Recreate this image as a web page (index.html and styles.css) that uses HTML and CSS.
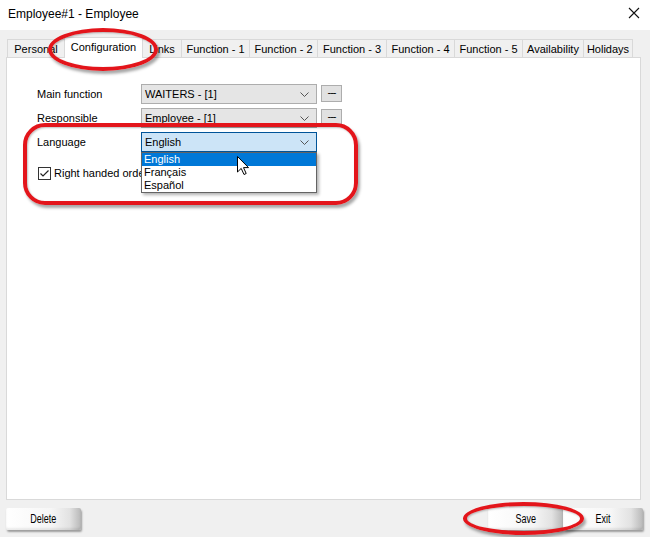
FILE: index.html
```html
<!DOCTYPE html>
<html lang="en">
<head>
  <meta charset="UTF-8" />
  <title>Employee#1 - Employee</title>
  <link rel="stylesheet" href="styles.css">
</head>
<body>
<div class="window">
  <div class="titlebar">
    <span class="title">Employee#1 - Employee</span>
    <svg class="close" width="12" height="12" viewBox="0 0 12 12">
      <path d="M1 1 L11 11 M11 1 L1 11" stroke="#111" stroke-width="1.1" fill="none"/>
    </svg>
  </div>

  <div class="tabs">
    <div class="tab">Personal</div>
    <div class="tab active">Configuration</div>
    <div class="tab">Links</div>
    <div class="tab">Function - 1</div>
    <div class="tab">Function - 2</div>
    <div class="tab">Function - 3</div>
    <div class="tab">Function - 4</div>
    <div class="tab">Function - 5</div>
    <div class="tab">Availability</div>
    <div class="tab">Holidays</div>
  </div>

  <div class="panel">
    <div class="form">
      <label class="field-label">Main function</label>
      <div class="combo"><span>WAITERS - [1]</span>
        <svg class="chev" width="9" height="5" viewBox="0 0 9 5"><path d="M0.5 0.5 L4.5 4.5 L8.5 0.5" stroke="#555" fill="none"/></svg>
      </div>
      <button class="dots">---</button>

      <label class="field-label">Responsible</label>
      <div class="combo"><span>Employee - [1]</span>
        <svg class="chev" width="9" height="5" viewBox="0 0 9 5"><path d="M0.5 0.5 L4.5 4.5 L8.5 0.5" stroke="#555" fill="none"/></svg>
      </div>
      <button class="dots">---</button>

      <label class="field-label">Language</label>
      <div class="combo-wrap">
        <div class="combo focus"><span>English</span>
          <svg class="chev" width="9" height="5" viewBox="0 0 9 5"><path d="M0.5 0.5 L4.5 4.5 L8.5 0.5" stroke="#555" fill="none"/></svg>
        </div>
        <ul class="dropdown">
          <li class="selected">English</li>
          <li>Français</li>
          <li>Español</li>
        </ul>
      </div>
    </div>

    <label class="check">
      <svg class="box" width="13" height="13" viewBox="0 0 13 13">
        <rect x="0.5" y="0.5" width="12" height="12" fill="#fff" stroke="#333"/>
        <path d="M2.5 6.5 L5 9 L10.5 3.5" stroke="#222" stroke-width="1.2" fill="none"/>
      </svg>
      <span class="check-text">Right handed order</span>
    </label>
  </div>

  <div class="footer">
    <button class="btn"><span>Delete</span></button>
    <div class="footer-right">
      <button class="btn"><span>Save</span></button>
      <button class="btn exit"><span>Exit</span></button>
    </div>
  </div>

  <!-- annotations drawn over the dialog -->
  <div class="mark mark-tab"></div>
  <div class="mark mark-lang"></div>
  <div class="mark mark-save"></div>
  <svg class="cursor" width="13" height="20" viewBox="0 0 13 20">
    <path d="M0.5 0.5 L0.5 16 L4.2 12.4 L7 18.5 L9.2 17.5 L6.5 11.6 L11.5 11.6 Z" fill="#fff" stroke="#000" stroke-width="1"/>
  </svg>
</div>
</body>
</html>
```

FILE: styles.css
```css
body {
  margin: 0;
  font-family: 'Liberation Sans', Arial, sans-serif;
  font-size: 11px;
  color: #000;
  background-color: #f0f0f0;
}
.window {
  position: relative;
  width: 650px;
  height: 537px;
  overflow: hidden;
  background-color: #f0f0f0;
}
.titlebar {
  height: 30px;
  background-color: #fff;
  display: flex;
  align-items: center;
  justify-content: space-between;
  padding: 0 10px 0 8px;
  box-sizing: border-box;
}
.title {
  font-size: 12px;
  margin-top: -3px;
}
.close {
  margin-top: -4px;
}
.tabs {
  display: grid;
  grid-template-columns: 58px 78px 39px 68px 68px 69px 68px 68px 61px 49px;
  align-items: end;
  height: 20px;
  margin: 7px 0 0 7px;
  position: relative;
  z-index: 1;
}
.tab {
  height: 18px;
  border: 1px solid #d9d9d9;
  border-bottom: none;
  border-left: none;
  box-sizing: border-box;
  background-color: #f0f0f0;
  display: flex;
  align-items: center;
  justify-content: center;
  white-space: nowrap;
}
.tab:first-child {
  border-left: 1px solid #d9d9d9;
}
.tab.active {
  height: 21px;
  margin-bottom: -1px;
  background-color: #fff;
  border-left: 1px solid #d9d9d9;
  margin-left: -1px;
  padding-bottom: 2px;
}
.panel {
  margin-left: 6px;
  width: 635px;
  height: 443px;
  background-color: #fff;
  border: 1px solid #d9d9d9;
  box-sizing: border-box;
}
.form {
  display: grid;
  grid-template-columns: 100px 176px 21px;
  grid-auto-rows: 20px;
  column-gap: 4px;
  row-gap: 4px;
  padding: 26px 0 0 30px;
  align-items: center;
}
.field-label {
  line-height: 20px;
}
.combo-wrap {
  position: relative;
  height: 20px;
}
.combo {
  height: 20px;
  box-sizing: border-box;
  border: 1px solid #adadad;
  background-color: #e5e5e5;
  display: flex;
  align-items: center;
  justify-content: space-between;
  padding: 0 7px 0 3px;
}
.combo.focus {
  background-color: #cce4f7;
  border-color: #005499;
}
.dots {
  height: 17px;
  width: 21px;
  align-self: start;
  margin-top: 1px;
  border: 1px solid #adadad;
  background-color: #e1e1e1;
  font-family: inherit;
  font-size: 11px;
  letter-spacing: -1px;
  padding: 0 0 3px 0;
  line-height: 12px;
}
.dropdown {
  position: absolute;
  left: 0;
  top: 20px;
  width: 176px;
  margin: 0;
  padding: 0;
  list-style: none;
  background-color: #fff;
  border: 1px solid #646464;
  box-sizing: border-box;
  box-shadow: 2px 2px 3px rgba(0,0,0,0.3);
  z-index: 2;
}
.dropdown li {
  height: 13px;
  line-height: 13px;
  padding-left: 2px;
}
.dropdown li.selected {
  background-color: #0078d7;
  color: #fff;
}
.check {
  display: flex;
  align-items: center;
  gap: 3px;
  margin: 14px 0 0 31px;
  height: 14px;
  white-space: nowrap;
}
.check-text {
  width: 87px;
  overflow: hidden;
}
.footer {
  height: 37px;
  display: flex;
  justify-content: space-between;
  padding: 8px 7px 0 6px;
  box-sizing: border-box;
}
.footer-right {
  display: flex;
}
.btn {
  width: 75px;
  height: 22px;
  border: none;
  border-radius: 2px;
  background: linear-gradient(to right, #ffffff 0%, #f6f6f6 60%, #e2e2e2 85%, #b8b8b8 100%);
  box-shadow: 1px 2px 2px rgba(0,0,0,0.35), inset 0 -2px 2px rgba(0,0,0,0.08);
  font-family: inherit;
  font-size: 12px;
  padding: 0;
}
.btn span {
  display: inline-block;
  transform: scaleX(0.75);
}
.btn.exit {
  width: 80px;
}
.mark {
  position: absolute;
  box-sizing: border-box;
  border: 4px solid #e3151b;
  box-shadow: 2px 3px 3px rgba(0,0,0,0.35), inset 1px 1px 2px rgba(0,0,0,0.25);
  z-index: 5;
}
.mark-tab {
  left: 48px;
  top: 28px;
  width: 110px;
  height: 43px;
  border-radius: 50%;
}
.mark-lang {
  left: 23px;
  top: 123px;
  width: 335px;
  height: 82px;
  border-radius: 22px;
}
.mark-save {
  left: 463px;
  top: 502px;
  width: 121px;
  height: 33px;
  border-radius: 50%;
}
.cursor {
  position: absolute;
  left: 237px;
  top: 156px;
  z-index: 6;
}
```
